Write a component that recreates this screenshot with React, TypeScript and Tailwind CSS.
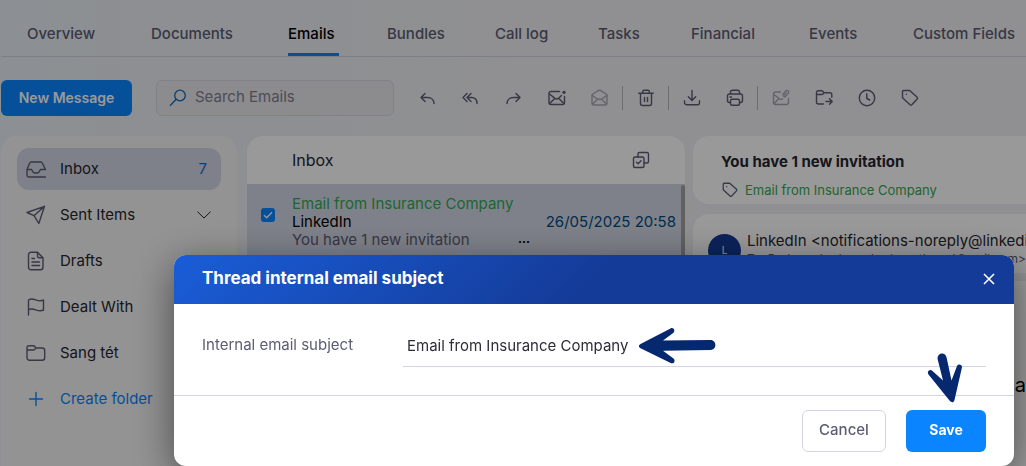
import { ReactNode } from "react";

interface IconProps {
  children: ReactNode;
  className?: string;
}

function Icon({ children, className = "size-5" }: IconProps) {
  return (
    <svg
      viewBox="0 0 20 20"
      className={className}
      fill="none"
      stroke="currentColor"
      strokeWidth="1.4"
      strokeLinecap="round"
      strokeLinejoin="round"
      aria-hidden="true"
    >
      {children}
    </svg>
  );
}

const tagIcon = (
  <>
    <path d="M2.5 3.5a1 1 0 0 1 1-1H9.700l7.500 6.700a1.300 1.300 0 0 1 0 1.800l-5.400 5.700a1.300 1.300 0 0 1-1.800 0L2.500 9.800Z" />
    <path d="M6.300 6.300h.1" />
  </>
);

const tabs = [
  "Overview",
  "Documents",
  "Emails",
  "Bundles",
  "Call log",
  "Tasks",
  "Financial",
  "Events",
  "Custom Fields",
];

interface Tool {
  label: string;
  icon: ReactNode;
  disabled?: boolean;
  divider?: boolean;
}

const tools: Tool[] = [
  {
    label: "Reply",
    icon: <path d="M7 5.500 3 9.500l4 4M3 9.500H9.500c4 0 6.500 2.500 6.500 6" />,
  },
  {
    label: "Reply all",
    icon: <path d="M6 5.500 2 9.500l4 4M10 5.500l-4 4 4 4M6 9.500H10.500c3.500 0 5.500 2.500 5.500 6" />,
  },
  {
    label: "Forward",
    icon: <path d="m12 5.500 4 4-4 4M16 9.500H9.500c-4 0-6.500 2.500-6.500 6" />,
  },
  {
    label: "Mark as unread",
    icon: (
      <>
        <path d="M12.500 3.500H4a2 2 0 0 0-2 2v9a2 2 0 0 0 2 2h11.500a2 2 0 0 0 2-2V8.500" />
        <path d="m2.500 6 5.500 4.400a2.800 2.800 0 0 0 3.400 0L14.500 7.500M2.700 15.500l4.700-4.800M16.800 15.500l-4.700-4.800" />
        <circle cx="17" cy="4.300" r="1.600" fill="currentColor" stroke="none" />
      </>
    ),
  },
  {
    label: "Mark as read",
    disabled: true,
    divider: true,
    icon: (
      <>
        <path d="M2 7.300a1.500 1.500 0 0 1 .8-1.300l5.900-3.600a1.600 1.600 0 0 1 1.600 0L16.200 6a1.500 1.500 0 0 1 .8 1.300V15a2 2 0 0 1-2 2H4a2 2 0 0 1-2-2Z" />
        <path d="m2.300 7.500 5.200 3.800h4l5.200-3.800M2.500 16l5-4.700M16.500 16l-5-4.700" />
      </>
    ),
  },
  {
    label: "Delete",
    divider: true,
    icon: (
      <path d="M2.800 5.300h14.400M6.700 5V3.600a1.400 1.400 0 0 1 1.400-1.400h3.800a1.400 1.400 0 0 1 1.400 1.400V5M4.500 5.300v10.200a2 2 0 0 0 2 2h7a2 2 0 0 0 2-2V5.300M8.500 9.500v4M11.500 9.500v4" />
    ),
  },
  {
    label: "Download",
    icon: <path d="M10 2.500v9.700M6.300 8.700l3.700 3.800 3.700-3.800M2.500 12.700v2a2 2 0 0 0 2 2h11a2 2 0 0 0 2-2v-2" />,
  },
  {
    label: "Print",
    divider: true,
    icon: (
      <>
        <path d="M5.500 6V4.300a2 2 0 0 1 2-2h5a2 2 0 0 1 2 2V6M5.500 14.500h-1a2 2 0 0 1-2-2V8a2 2 0 0 1 2-2h11a2 2 0 0 1 2 2v4.500a2 2 0 0 1-2 2h-1M5 9h1.500" />
        <rect x="5.500" y="11.300" width="9" height="6" rx="1.500" />
      </>
    ),
  },
  {
    label: "Link email",
    disabled: true,
    icon: (
      <>
        <path d="M9.500 4H4.500a2 2 0 0 0-2 2v8.500a2 2 0 0 0 2 2h11a2 2 0 0 0 2-2V10.500" />
        <path d="m3 6.500 5.300 4.200c1 .8 2.400.8 3.400.1M3.200 15.500l4.300-4.500" />
        <path d="m11.500 6.800 3-3.600c1.700-1.900 4.300.3 2.700 2.200l-2.700 3.100c-1 1.100-2.400 0-1.500-1.200l2.200-2.600" strokeWidth="1.300" />
      </>
    ),
  },
  {
    label: "Move to folder",
    icon: (
      <path d="M2.500 7V4.300a1.600 1.600 0 0 1 1.600-1.600h3.500a1.600 1.600 0 0 1 1.300.7l.9 1.300h6a2 2 0 0 1 2 2v2.600M2.500 6.500h5.300a1.500 1.500 0 0 0 1.300-.7l.6-1M2.500 6.500V14a2 2 0 0 0 2 2h5M12 13.500h6M15.500 10.700l2.700 2.800-2.700 2.800" />
    ),
  },
  {
    label: "Snooze",
    icon: (
      <>
        <circle cx="10" cy="10" r="7.700" />
        <path d="M9.800 5.800v4.700l3 1.500" />
      </>
    ),
  },
  { label: "Tag", icon: tagIcon },
];

interface Folder {
  name: string;
  icon: ReactNode;
  count?: number;
  expandable?: boolean;
}

const folders: Folder[] = [
  {
    name: "Inbox",
    count: 7,
    icon: (
      <path d="M19.500 18H3a2 2 0 0 1-2-2V10.500l2.600-6.200A2 2 0 0 1 5.500 3h9a2 2 0 0 1 1.900 1.300L19.500 10.500M1 10.500h4.500l1.600 2.700a1.500 1.500 0 0 0 1.300.8h3.200a1.500 1.500 0 0 0 1.300-.8L14.500 10.500h5" />
    ),
  },
  {
    name: "Sent Items",
    expandable: true,
    icon: <path d="M18.500 1.300 1 7.500l7 3.200 4.800 7.800ZM8 10.700l10.500-9.400" />,
  },
  {
    name: "Drafts",
    icon: (
      <path d="M11.500 1.300H5a2.500 2.500 0 0 0-2.500 2.500v12.400A2.500 2.500 0 0 0 5 18.700h9.500a2.500 2.500 0 0 0 2.500-2.500V6.800ZM11.500 1.300v3.500a2 2 0 0 0 2 2H17M6 7.500h2.500M6 11h7.500M6 14.500h7.500" />
    ),
  },
  {
    name: "Dealt With",
    icon: <path d="M2.500 18V3c5-3.500 9 3 15 0v10c-6 3-10-3.500-15 0" />,
  },
  {
    name: "Sang tét",
    icon: (
      <path d="M1 7V4.500A1.800 1.800 0 0 1 2.800 2.700h4.300a2 2 0 0 1 1.600.8l1.100 1.500h6.400a2.500 2.500 0 0 1 2.500 2.500v7.200a2.500 2.500 0 0 1-2.500 2.500H3.500A2.500 2.500 0 0 1 1 14.700V7h6.500a1.800 1.800 0 0 0 1.500-.8L9.800 5" />
    ),
  },
];

function Tabs() {
  return (
    <nav className="ml-px grid grid-cols-[124fr_137fr_99fr_108fr_103fr_93fr_118fr_104fr_113fr] border-b border-[#d3d3e2] pl-[26px] pt-[23px]">
      {tabs.map((tab) => (
        <div key={tab}>
          <a
            href="#"
            className={
              tab === "Emails"
                ? "inline-block h-8 whitespace-nowrap border-b-[3px] border-[#0a84ff] pr-1 leading-5 text-black"
                : "inline-block h-8 whitespace-nowrap leading-5"
            }
          >
            {tab}
          </a>
        </div>
      ))}
    </nav>
  );
}

function Toolbar() {
  return (
    <div className="flex items-center pl-px pt-[23px]">
      <button className="h-9 w-[131px] shrink-0 rounded-md bg-[#0a84ff] text-sm font-semibold text-white">
        New Message
      </button>
      <label className="ml-6 flex h-9 w-[238px] shrink-0 items-center gap-2 rounded-md border border-[#d8d8e2] bg-[#e9e9ee] pl-3">
        <svg viewBox="0 0 18 18" className="size-[18px] shrink-0" fill="none" stroke="#0a6ebd" strokeWidth="1.3" aria-hidden="true">
          <circle cx="11" cy="6.500" r="5.300" />
          <path d="M7.200 10.300 1 16.700" />
        </svg>
        <input
          type="search"
          aria-label="Search Emails"
          placeholder="Search Emails"
          className="w-full bg-transparent pb-0.5 outline-none placeholder:text-[#80808f]"
        />
      </label>
      <div className="ml-3 flex items-center">
        {tools.map((tool) => (
          <div key={tool.label} className="flex items-center">
            <button
              aria-label={tool.label}
              disabled={tool.disabled}
              className="flex w-[43px] justify-center disabled:text-[#a6a6b2]"
            >
              <Icon>{tool.icon}</Icon>
            </button>
            {tool.divider && <span className="mx-px h-6 w-px bg-[#b4b4bc]" />}
          </div>
        ))}
      </div>
    </div>
  );
}

function Sidebar() {
  return (
    <aside className="ml-px flex w-[236px] shrink-0 flex-col gap-1 rounded-t-2xl bg-[#f5f5f6] px-4 pt-3 text-[#26262f]">
      {folders.map((folder) => (
        <button
          key={folder.name}
          className={
            folder.name === "Inbox"
              ? "flex h-[42px] items-center gap-3.5 rounded-xl bg-[#d3d8e5] pl-[9px] pr-3.5 text-left"
              : "flex h-[42px] items-center gap-3.5 pl-[9px] pr-2.5 text-left"
          }
        >
          <Icon className="size-5 shrink-0 text-[#5c5c74]">{folder.icon}</Icon>
          <span className="flex-1">{folder.name}</span>
          {folder.count && <span className="text-[#0a6ee0]">{folder.count}</span>}
          {folder.expandable && (
            <svg viewBox="0 0 14 8" className="h-2 w-3.5" fill="none" stroke="currentColor" aria-hidden="true">
              <path d="m.5.700 6.500 6.300L13.500.7" />
            </svg>
          )}
        </button>
      ))}
      <button className="flex h-[42px] items-center gap-3.5 pl-[9px] text-left text-[#0a84ff]">
        <Icon className="size-5 shrink-0">
          <path d="M10 3.500v13M3.500 10h13" />
        </Icon>
        Create folder
      </button>
    </aside>
  );
}

function MessageList() {
  return (
    <section className="ml-2.5 flex w-[438px] shrink-0 flex-col overflow-hidden rounded-t-2xl bg-white">
      <header className="flex h-12 shrink-0 items-center justify-between pl-[45px] pr-[34px] text-[#26262f]">
        <h2 className="text-base">Inbox</h2>
        <button aria-label="Select all" className="text-[#5c5c74]">
          <Icon>
            <rect x="2.500" y="7" width="10.500" height="10.500" rx="1.500" />
            <path d="M7 7V4a1.500 1.500 0 0 1 1.500-1.500H16A1.500 1.500 0 0 1 17.500 4v7.500A1.500 1.500 0 0 1 16 13h-3M5.500 12.300l1.600 1.500 2.900-3.100" />
          </Icon>
        </button>
      </header>
      <div className="flex flex-1 bg-[#d3d8e5]">
        <div className="flex min-w-0 flex-1 items-start pl-3.5 pr-[5px] pt-[11px] leading-[18px]">
          <label className="relative mt-[13px] flex size-3.5 shrink-0">
            <input
              type="checkbox"
              defaultChecked
              aria-label="Select conversation"
              className="size-3.5 appearance-none rounded-[3px] bg-[#0a84ff]"
            />
            <svg viewBox="0 0 14 14" className="absolute inset-0 size-3.5" fill="none" stroke="#fff" strokeWidth="1.300" aria-hidden="true">
              <path d="m3 7.200 2.700 2.600L11 4.300" />
            </svg>
          </label>
          <div className="ml-[17px] flex-1 whitespace-nowrap">
            <p className="text-[#35a853]">Email from Insurance Company</p>
            <div className="flex justify-between">
              <span className="text-black">LinkedIn</span>
              <time className="text-[#004a80]">26/05/2025 20:58</time>
            </div>
            <div className="flex w-[238px] justify-between">
              <span>You have 1 new invitation</span>
              <span className="text-xs font-bold text-black">...</span>
            </div>
          </div>
        </div>
        <div className="mt-px w-1 rounded-full bg-[#a2a2a0]" />
      </div>
    </section>
  );
}

function Reader() {
  return (
    <section className="ml-2 flex min-w-0 flex-1 flex-col whitespace-nowrap">
      <div className="h-[68px] shrink-0 rounded-l-2xl bg-white pl-7 pt-3.5">
        <h2 className="font-bold leading-6 text-[#26262f]">You have 1 new invitation</h2>
        <div className="mt-1 flex items-center gap-1.5 text-[13px] leading-6 text-[#35a853]">
          <Icon className="size-[18px] text-[#5c5c74]">{tagIcon}</Icon>
          Email from Insurance Company
        </div>
      </div>
      <div className="mt-2.5 flex h-[59px] shrink-0 gap-1.5 rounded-l-2xl bg-white pl-[15px] pt-[17px]">
        <span className="mt-[3px] flex size-[33px] shrink-0 items-center justify-center rounded-full bg-[#143b98] text-[10px] text-white">
          L
        </span>
        <div className="min-w-0 flex-1">
          <p className="leading-5 text-[#26262f]">LinkedIn &lt;notifications-noreply@linkedi</p>
          <p className="flex justify-between text-xs leading-4">
            <span>To: Barbara Jordan</span>
            <span>&lt;barbara.thread@mail.com&gt;</span>
          </p>
        </div>
      </div>
      <div className="mt-2 flex-1 rounded-tl-2xl bg-white pt-[90px] text-right text-xl text-black">
        Invitation from Jana
      </div>
    </section>
  );
}

function SubjectDialog() {
  return (
    <div className="fixed inset-0 flex items-end bg-black/40 pl-[174px] pr-3">
      <form
        role="dialog"
        aria-labelledby="dialog-title"
        className="relative flex-1 rounded-xl bg-white shadow-[0_10px_40px_rgba(0,0,0,0.5)]"
      >
        <header className="flex h-[49px] items-center justify-between rounded-t-xl bg-[linear-gradient(135deg,#1a5dd8_0%,#143b98_50%)] pb-0.5 pl-7 pr-[18px] text-white">
          <h1 id="dialog-title" className="text-[17px] font-bold">
            Thread internal email subject
          </h1>
          <button type="button" aria-label="Close">
            <svg viewBox="0 0 14 14" className="size-3.5" fill="none" stroke="currentColor" strokeWidth="1.600" aria-hidden="true">
              <path d="m2 2 10 10M12 2 2 12" />
            </svg>
          </button>
        </header>
        <div className="flex h-[91px] items-start px-7 pt-5">
          <label htmlFor="subject" className="w-[201px] leading-[42px]">
            Internal email subject
          </label>
          <input
            id="subject"
            defaultValue="Email from Insurance Company"
            className="h-[43px] min-w-0 flex-1 border-b border-[#d3d3e6] pl-1 text-[#2d2d38] outline-none"
          />
        </div>
        <footer className="flex h-[71px] items-center justify-end gap-5 border-t border-[#d3d3e6] px-7">
          <button type="button" className="h-[42px] w-[84px] rounded-md border border-[#d3d3e6] pb-0.5 font-medium">
            Cancel
          </button>
          <button type="button" className="h-[42px] w-20 rounded-md bg-[#0a84ff] pb-0.5 text-sm font-bold text-white">
            Save
          </button>
        </footer>

        {/* pointers to the subject field and the save button */}
        <svg viewBox="0 0 78 36" className="absolute left-[465px] top-[73px] h-9 w-[78px]" fill="#06286f" aria-hidden="true">
          <path d="M1.500 16 31.500.4c3-1.500 5.300 2.300 2.700 4.500L24 12.500l47.500-.5c6.500 0 6.500 10 0 10L24 22.800l10.500 7.600c2.600 2.200.2 6.200-2.800 4.600L1.500 20.200c-2.200-1.300-2.200-3 0-4.200Z" />
        </svg>
        <svg viewBox="0 0 36 50" className="absolute right-[51px] top-[98px] h-[50px] w-9" fill="#06286f" aria-hidden="true">
          <path d="M10.700 6.500C9.500-.3 18.500-2 19.700 5l4.800 22.500 5.300-14c1.300-3.500 5.800-2 5.100 1.300L27.500 47c-.8 2.800-3 3-4.800.8L1.500 21.500c-2.200-3.200 1.700-6 4-3.600L16 27.500Z" />
        </svg>
      </form>
    </div>
  );
}

export default function App() {
  return (
    <div className="flex h-screen flex-col overflow-hidden bg-linear-to-r from-[#e9eef5] to-[#f0f0f3] to-50% font-[Inter,sans-serif] text-[15px] text-[#5c5c74]">
      <div className="font-medium">
        <Tabs />
      </div>
      <Toolbar />
      <main className="flex min-h-0 flex-1 pt-5">
        <Sidebar />
        <MessageList />
        <Reader />
      </main>
      <SubjectDialog />
    </div>
  );
}
